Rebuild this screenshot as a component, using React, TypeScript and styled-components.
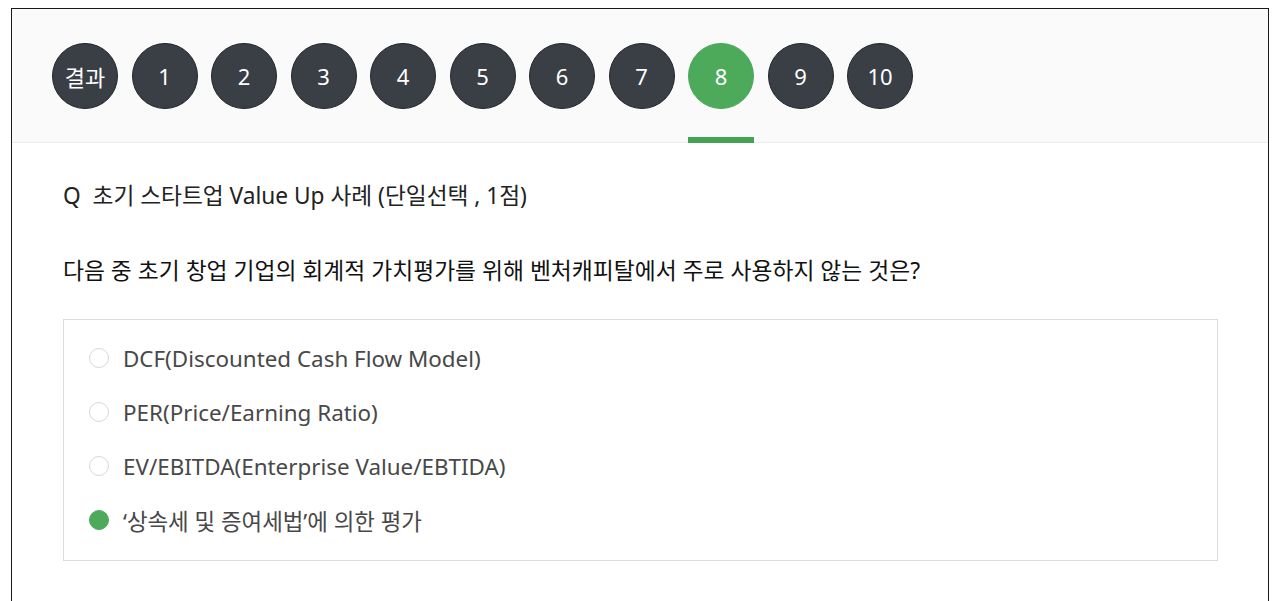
import React from "react";
import styled, { createGlobalStyle } from "styled-components";

const Global = createGlobalStyle`
  html, body { margin: 0; padding: 0; background: #ffffff; }
  body { font-family: "Noto Sans", "Noto Sans CJK KR", sans-serif; }
`;

const Frame = styled.div`
  margin: 8px 11px 0 11px;
  border: 1px solid #1a1a1a;
  border-bottom: none;
  min-height: 620px;
  background: #ffffff;
`;

const Header = styled.div`
  background: #fafafa;
  border-bottom: 1px solid #ececec;
  padding: 34px 0 0 40px;
  height: 99px;
`;

const TabList = styled.div`
  display: flex;
  gap: 13.5px;
  height: 100px;
  margin-bottom: -1px;
`;

const Tab = styled.div`
  width: 66px;
  display: flex;
  flex-direction: column;
  justify-content: space-between;
  align-items: center;
`;

const Circle = styled.div<{ $active?: boolean }>`
  width: 66px;
  height: 66px;
  border-radius: 50%;
  box-sizing: border-box;
  background: ${(p) => (p.$active ? "#4caa5a" : "#3a3e45")};
  border: 1px solid ${(p) => (p.$active ? "#4caa5a" : "#23262b")};
  color: #ffffff;
  display: flex;
  align-items: center;
  justify-content: center;
  font-size: 22px;
  font-family: "Noto Sans", "Noto Sans CJK KR", sans-serif;
`;

const Bar = styled.div<{ $active?: boolean }>`
  width: 66px;
  height: 6px;
  background: ${(p) => (p.$active ? "#43a352" : "transparent")};
`;

const Content = styled.div`
  padding: 0 50px 0 51px;
`;

const Title = styled.div`
  font-size: 22.7px;
  color: #222;
  line-height: 28px;
  margin-top: 39px;
  white-space: pre;
`;

const Question = styled.div`
  font-size: 22.8px;
  color: #111;
  line-height: 28px;
  margin-top: 47px;
`;

const OptionBox = styled.div`
  margin-top: 34px;
  border: 1px solid #dcdcdc;
  padding: 11px 25px 13px;
`;

const Option = styled.div`
  display: flex;
  align-items: center;
  height: 54px;
  gap: 14px;
  font-size: 22.4px;
  color: #484848;
`;

const Radio = styled.span<{ $checked?: boolean }>`
  width: 20px;
  height: 20px;
  box-sizing: border-box;
  border-radius: 50%;
  border: 1px solid ${(p) => (p.$checked ? "#4caa5a" : "#d8d8d8")};
  background: ${(p) => (p.$checked ? "#4caa5a" : "#ffffff")};
  flex: none;
`;

const tabs = ["결과", "1", "2", "3", "4", "5", "6", "7", "8", "9", "10"];
const options = [
  "DCF(Discounted Cash Flow Model)",
  "PER(Price/Earning Ratio)",
  "EV/EBITDA(Enterprise Value/EBTIDA)",
  "‘상속세 및 증여세법’에 의한 평가",
];

export default function App() {
  return (
    <>
      <Global />
      <Frame>
        <Header>
          <TabList>
            {tabs.map((t) => (
              <Tab key={t}>
                <Circle $active={t === "8"}>{t}</Circle>
                <Bar $active={t === "8"} />
              </Tab>
            ))}
          </TabList>
        </Header>
        <Content>
          <Title>{"Q  초기 스타트업 Value Up 사례 (단일선택 , 1점)"}</Title>
          <Question>
            다음 중 초기 창업 기업의 회계적 가치평가를 위해 벤처캐피탈에서 주로 사용하지 않는 것은?
          </Question>
          <OptionBox>
            {options.map((o, i) => (
              <Option key={o}>
                <Radio $checked={i === 3} />
                {o}
              </Option>
            ))}
          </OptionBox>
        </Content>
      </Frame>
    </>
  );
}
